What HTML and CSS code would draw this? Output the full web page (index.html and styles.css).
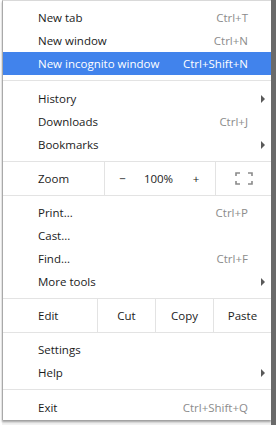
FILE: index.html
```html
<!DOCTYPE html>
<html lang="en">
<head>
  <meta charset="UTF-8" />
  <title>Chrome menu</title>
  <link rel="stylesheet" href="styles.css">
</head>
<body>

  <div class="screen">
    <div class="page-edge"></div>

    <div class="menu">
      <div class="item"><span class="label">New tab</span><span class="key">Ctrl+T</span></div>
      <div class="item"><span class="label">New window</span><span class="key">Ctrl+N</span></div>
      <div class="item active"><span class="label">New incognito window</span><span class="key">Ctrl+Shift+N</span></div>

      <div class="sep"></div>

      <div class="item"><span class="label">History</span><span class="arrow"></span></div>
      <div class="item"><span class="label">Downloads</span><span class="key">Ctrl+J</span></div>
      <div class="item"><span class="label">Bookmarks</span><span class="arrow"></span></div>

      <!-- zoom controls -->
      <div class="zoom-row">
        <div class="cell zoom-label">Zoom</div>
        <div class="cell zoom-minus">−</div>
        <div class="cell zoom-value">100%</div>
        <div class="cell zoom-plus">+</div>
        <div class="cell zoom-full">
          <svg width="18" height="13" viewBox="0 0 18 13">
            <path d="M1 4V1h4M13 1h4v3M17 9v3h-4M5 12H1V9" fill="none" stroke="#8a8a8a" stroke-width="1.6"/>
          </svg>
        </div>
      </div>

      <div class="item"><span class="label">Print...</span><span class="key">Ctrl+P</span></div>
      <div class="item"><span class="label">Cast...</span></div>
      <div class="item"><span class="label">Find...</span><span class="key">Ctrl+F</span></div>
      <div class="item"><span class="label">More tools</span><span class="arrow"></span></div>

      <!-- edit controls -->
      <div class="edit-row">
        <div class="cell edit-label">Edit</div>
        <div class="cell edit-btn">Cut</div>
        <div class="cell edit-btn">Copy</div>
        <div class="cell edit-btn paste">Paste</div>
      </div>

      <div class="item"><span class="label">Settings</span></div>
      <div class="item"><span class="label">Help</span><span class="arrow"></span></div>

      <div class="sep"></div>

      <div class="item"><span class="label">Exit</span><span class="key">Ctrl+Shift+Q</span></div>
    </div>

    <div class="side-bar"></div>
  </div>

</body>
</html>
```

FILE: styles.css
```css
* {
  margin: 0;
  padding: 0;
  box-sizing: border-box;
}

body {
  font-family: 'Open Sans', 'Noto Sans', sans-serif;
  font-size: 11.5px;
  color: #1b1b1b;
  background: #f2f2f2;
  width: 276px;
  height: 425px;
  overflow: hidden;
}

.screen {
  display: flex;
  align-items: flex-start;
  height: 425px;
}

.page-edge {
  width: 2px;
  height: 425px;
  background: #fff;
}

.menu {
  width: 269px;
  background: #fff;
  border-left: 1px solid #a9a9a9;
  border-top: 1px solid #d9d9d9;
  padding: 5px 0 0;
  height: 420px;
  box-shadow: 0 2px 2px rgba(0, 0, 0, 0.35);
}

.side-bar {
  width: 5px;
  height: 425px;
  background: #6a6a6a;
}

.item {
  display: flex;
  align-items: center;
  height: 23px;
  padding: 0 6px 0 35px;
  white-space: nowrap;
}

.item .label {
  flex: 1;
}

.item .key {
  color: #8c8c8c;
  margin-right: 17px;
}

.item .arrow {
  width: 0;
  height: 0;
  border-top: 4px solid transparent;
  border-bottom: 4px solid transparent;
  border-left: 4px solid #5a5a5a;
}

.item.active {
  background: #4183ec;
  color: #fff;
}

.item.active .key {
  color: #fff;
}

.sep {
  height: 1px;
  background: #e3e3e3;
  margin: 5px 0 6px;
}

/* rows with buttons */
.zoom-row,
.edit-row {
  display: flex;
  height: 35px;
  border-top: 1px solid #e3e3e3;
  border-bottom: 1px solid #e3e3e3;
  margin: 5px 0 5px;
}

.cell {
  display: flex;
  align-items: center;
  justify-content: center;
}

.zoom-label {
  width: 102px;
  justify-content: flex-start;
  padding-left: 35px;
  border-right: 1px solid #e3e3e3;
}

.zoom-minus {
  width: 35px;
}

.zoom-value {
  width: 37px;
}

.zoom-plus {
  width: 39px;
  border-right: 1px solid #e3e3e3;
}

.zoom-full {
  flex: 1;
}

.edit-label {
  width: 95px;
  justify-content: flex-start;
  padding-left: 35px;
  border-right: 1px solid #e3e3e3;
}

.edit-btn {
  width: 58px;
  border-right: 1px solid #e3e3e3;
}

.edit-btn.paste {
  flex: 1;
  border-right: none;
}
```
